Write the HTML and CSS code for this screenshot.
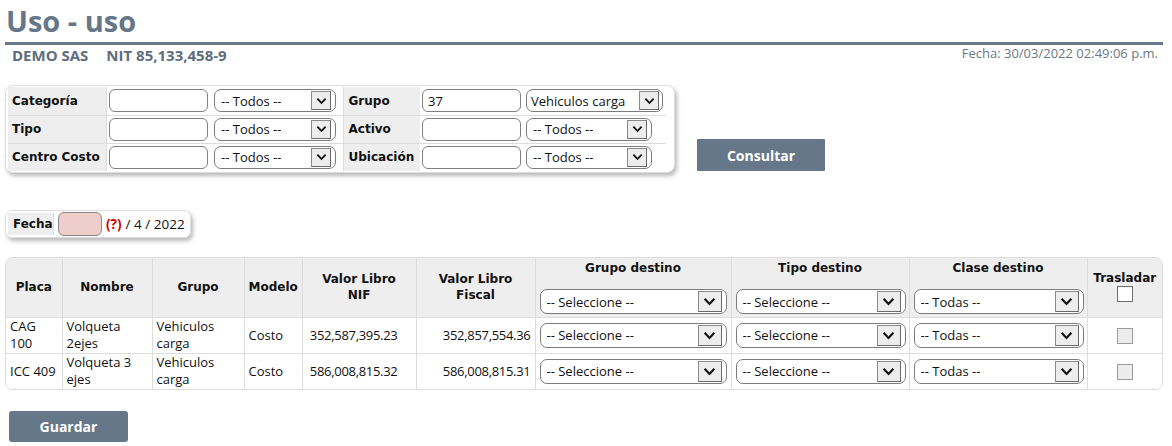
FILE: index.html
```html
<!DOCTYPE html>
<html lang="es">
<head>
<meta charset="utf-8">
<title>Uso - uso</title>
<link rel="stylesheet" href="styles.css">
</head>
<body>
<div class="page">
  <h1 class="title">Uso - uso</h1>
  <div class="subhead">
    <span class="company">DEMO SAS</span>
    <span class="nit">NIT 85,133,458-9</span>
    <span class="stamp">Fecha: 30/03/2022 02:49:06 p.m.</span>
  </div>

  <div class="filters-row">
    <div class="filters">
      <table class="ftable">
        <tr>
          <td class="flabel c1">Categoría</td>
          <td class="c2"><span class="txt"></span></td>
          <td class="c3 sep"><span class="sel w-f"><span class="sel-text">-- Todos --</span><span class="sel-btn"><svg viewBox="0 0 12 8"><path d="M1.5 1.5 L6 6.2 L10.5 1.5"/></svg></span></span></td>
          <td class="flabel c4">Grupo</td>
          <td class="c5"><span class="txt">37</span></td>
          <td class="c6"><span class="sel w-fw"><span class="sel-text">Vehiculos carga</span><span class="sel-btn"><svg viewBox="0 0 12 8"><path d="M1.5 1.5 L6 6.2 L10.5 1.5"/></svg></span></span></td>
        </tr>
        <tr>
          <td class="flabel c1">Tipo</td>
          <td class="c2"><span class="txt"></span></td>
          <td class="c3 sep"><span class="sel w-f"><span class="sel-text">-- Todos --</span><span class="sel-btn"><svg viewBox="0 0 12 8"><path d="M1.5 1.5 L6 6.2 L10.5 1.5"/></svg></span></span></td>
          <td class="flabel c4">Activo</td>
          <td class="c5"><span class="txt"></span></td>
          <td class="c6"><span class="sel w-f2"><span class="sel-text">-- Todos --</span><span class="sel-btn"><svg viewBox="0 0 12 8"><path d="M1.5 1.5 L6 6.2 L10.5 1.5"/></svg></span></span></td>
        </tr>
        <tr>
          <td class="flabel c1">Centro Costo</td>
          <td class="c2"><span class="txt"></span></td>
          <td class="c3 sep"><span class="sel w-f"><span class="sel-text">-- Todos --</span><span class="sel-btn"><svg viewBox="0 0 12 8"><path d="M1.5 1.5 L6 6.2 L10.5 1.5"/></svg></span></span></td>
          <td class="flabel c4">Ubicación</td>
          <td class="c5"><span class="txt"></span></td>
          <td class="c6"><span class="sel w-f2"><span class="sel-text">-- Todos --</span><span class="sel-btn"><svg viewBox="0 0 12 8"><path d="M1.5 1.5 L6 6.2 L10.5 1.5"/></svg></span></span></td>
        </tr>
      </table>
    </div>
    <button class="btn btn-consultar">Consultar</button>
  </div>

  <div class="fecha-box">
    <span class="flabel fecha-label">Fecha</span>
    <span class="fecha-input"></span>
    <span class="fecha-q">(?)</span>
    <span class="fecha-rest">/ 4 / 2022</span>
  </div>

  <div class="grid-wrap">
    <table class="grid">
      <thead>
        <tr>
          <th class="g1">Placa</th>
          <th class="g2">Nombre</th>
          <th class="g3">Grupo</th>
          <th class="g4">Modelo</th>
          <th class="g5">Valor Libro<br>NIF</th>
          <th class="g6">Valor Libro<br>Fiscal</th>
          <th class="g7 top"><div class="th-title">Grupo destino</div><span class="sel w-g7"><span class="sel-text">-- Seleccione --</span><span class="sel-btn big"><svg viewBox="0 0 12 8"><path d="M1.5 1.5 L6 6.2 L10.5 1.5"/></svg></span></span></th>
          <th class="g8 top"><div class="th-title">Tipo destino</div><span class="sel w-g8"><span class="sel-text">-- Seleccione --</span><span class="sel-btn big"><svg viewBox="0 0 12 8"><path d="M1.5 1.5 L6 6.2 L10.5 1.5"/></svg></span></span></th>
          <th class="g9 top"><div class="th-title">Clase destino</div><span class="sel w-g8"><span class="sel-text">-- Todas --</span><span class="sel-btn big"><svg viewBox="0 0 12 8"><path d="M1.5 1.5 L6 6.2 L10.5 1.5"/></svg></span></span></th>
          <th class="g10"><div class="th-trasladar">Trasladar</div><span class="chk chk-head"></span></th>
        </tr>
      </thead>
      <tbody>
        <tr>
          <td>CAG<br>100</td>
          <td>Volqueta<br>2ejes</td>
          <td>Vehiculos<br>carga</td>
          <td>Costo</td>
          <td class="num nif">352,587,395.23</td>
          <td class="num">352,857,554.36</td>
          <td class="selcell"><span class="sel w-g7"><span class="sel-text">-- Seleccione --</span><span class="sel-btn big"><svg viewBox="0 0 12 8"><path d="M1.5 1.5 L6 6.2 L10.5 1.5"/></svg></span></span></td>
          <td class="selcell"><span class="sel w-g8"><span class="sel-text">-- Seleccione --</span><span class="sel-btn big"><svg viewBox="0 0 12 8"><path d="M1.5 1.5 L6 6.2 L10.5 1.5"/></svg></span></span></td>
          <td class="selcell"><span class="sel w-g8"><span class="sel-text">-- Todas --</span><span class="sel-btn big"><svg viewBox="0 0 12 8"><path d="M1.5 1.5 L6 6.2 L10.5 1.5"/></svg></span></span></td>
          <td class="center"><span class="chk chk-row"></span></td>
        </tr>
        <tr>
          <td>ICC 409</td>
          <td>Volqueta 3<br>ejes</td>
          <td>Vehiculos<br>carga</td>
          <td>Costo</td>
          <td class="num nif">586,008,815.32</td>
          <td class="num">586,008,815.31</td>
          <td class="selcell"><span class="sel w-g7"><span class="sel-text">-- Seleccione --</span><span class="sel-btn big"><svg viewBox="0 0 12 8"><path d="M1.5 1.5 L6 6.2 L10.5 1.5"/></svg></span></span></td>
          <td class="selcell"><span class="sel w-g8"><span class="sel-text">-- Seleccione --</span><span class="sel-btn big"><svg viewBox="0 0 12 8"><path d="M1.5 1.5 L6 6.2 L10.5 1.5"/></svg></span></span></td>
          <td class="selcell"><span class="sel w-g8"><span class="sel-text">-- Todas --</span><span class="sel-btn big"><svg viewBox="0 0 12 8"><path d="M1.5 1.5 L6 6.2 L10.5 1.5"/></svg></span></span></td>
          <td class="center"><span class="chk chk-row"></span></td>
        </tr>
      </tbody>
    </table>
  </div>

  <button class="btn btn-guardar">Guardar</button>
</div>
</body>
</html>
```

FILE: styles.css
```css
html, body {
  margin: 0;
  padding: 0;
  background: #ffffff;
}

body {
  font-family: "Open Sans", "Noto Sans", sans-serif;
  font-size: 13px;
  color: #111111;
}

.page {
  padding: 0 9px 0 5px;
  width: 1158px;
}

.title {
  margin: 0;
  padding: 3px 0 3px 1px;
  line-height: 36px;
  font-size: 29px;
  font-weight: 700;
  color: #66778a;
  border-bottom: 3px solid #66778a;
}

.subhead {
  display: flex;
  align-items: flex-start;
  color: #5e6d7d;
}

.company, .nit {
  font-weight: 700;
  font-size: 15px;
  line-height: 18px;
  margin-top: 1px;
}

.company {
  margin-left: 7px;
}

.nit {
  margin-left: 18px;
}

.stamp {
  margin-left: auto;
  margin-right: 5px;
  font-size: 13px;
  line-height: 16px;
  color: #6d7782;
}

/* ---------- filters ---------- */
.filters-row {
  display: flex;
  align-items: flex-end;
  margin-top: 21px;
}

.filters {
  border: 1px solid #dedede;
  border-radius: 8px;
  padding: 1px 2px;
  background: #fff;
  box-shadow: 2px 3px 4px rgba(0, 0, 0, 0.28);
  width: 664px;
}

.ftable {
  border-collapse: collapse;
}

.ftable td {
  height: 28px;
  padding: 0;
  border-top: 1px solid #dcdcdc;
  box-sizing: border-box;
  vertical-align: middle;
}

.ftable tr:first-child td {
  border-top: none;
}

.flabel {
  background: #eeeeee;
  font-family: "DejaVu Sans", Verdana, sans-serif;
  font-weight: 700;
  font-size: 12px;
  color: #111;
  white-space: nowrap;
}

.c1 { width: 98px; padding-left: 4px !important; border-right: 1px solid #dcdcdc; }
.c2 { width: 104px; padding-left: 2px !important; }
.c3 { width: 133px; padding-left: 4px !important; }
.sep { border-right: 1px solid #dcdcdc; }
.c4 { width: 77px; padding-left: 5px !important; }
.c5 { width: 104px; padding-left: 2px !important; }
.c6 { width: 142px; padding-left: 2px !important; }

.txt {
  display: flex;
  align-items: center;
  box-sizing: border-box;
  width: 99px;
  height: 23px;
  border: 1px solid #808080;
  border-radius: 6px;
  padding: 0 5px;
  background: #fff;
  font-size: 13px;
}

.sel {
  display: inline-flex;
  align-items: center;
  justify-content: space-between;
  box-sizing: border-box;
  height: 23px;
  border: 1px solid #7c7c7c;
  border-radius: 7px;
  padding: 0 4px 0 6px;
  background: #fff;
  vertical-align: middle;
  text-align: left;
  font-family: "Open Sans", "Noto Sans", sans-serif;
  font-weight: 400;
  font-size: 13px;
  color: #111;
  white-space: nowrap;
}

.sel-text {
  overflow: hidden;
}

.sel-btn {
  display: flex;
  align-items: center;
  justify-content: center;
  box-sizing: border-box;
  width: 20px;
  height: 19px;
  background: #ededed;
  border: 1px solid #8a8a8a;
  border-right-color: #6a6a6a;
  border-bottom-color: #6a6a6a;
  flex: none;
}

.sel-btn svg {
  width: 11px;
  height: 8px;
  fill: none;
  stroke: #111;
  stroke-width: 2;
}

.sel-btn.big {
  width: 24px;
  height: 21px;
}

.sel-btn.big svg {
  width: 13px;
  height: 9px;
}

.w-f { width: 122px; }
.w-f2 { width: 126px; }
.w-fw { width: 137px; padding-right: 3px; padding-left: 4px; }
.w-g7 { width: 187px; height: 25px; }
.w-g8 { width: 170px; height: 25px; }

.btn {
  display: block;
  border: none;
  border-radius: 3px;
  background: #667789;
  color: #ffffff;
  font-family: "Open Sans", "Noto Sans", sans-serif;
  font-weight: 700;
  font-size: 14px;
  padding: 0;
}

.btn-consultar {
  width: 128px;
  height: 32px;
  margin-left: 22px;
  margin-bottom: 2px;
  border-radius: 1px;
}

/* ---------- fecha ---------- */
.fecha-box {
  display: inline-flex;
  align-items: stretch;
  margin-top: 37px;
  border: 1px solid #dedede;
  border-radius: 7px;
  padding: 2px 5px 2px 2px;
  box-shadow: 2px 3px 4px rgba(0, 0, 0, 0.28);
  height: 28px;
  box-sizing: border-box;
}

.fecha-label {
  display: flex;
  align-items: center;
  padding: 0 4px 0 5px;
  width: 46px;
  box-sizing: border-box;
  border-right: 1px solid #dcdcdc;
}

.fecha-input {
  display: block;
  align-self: center;
  width: 44px;
  height: 24px;
  box-sizing: border-box;
  margin-left: 4px;
  border: 1px solid #888;
  border-radius: 6px;
  background: #efcdcd;
}

.fecha-q {
  display: flex;
  align-items: center;
  margin-left: 4px;
  color: #cc0000;
  font-weight: 700;
  font-size: 13.5px;
}

.fecha-rest {
  display: flex;
  align-items: center;
  margin-left: 4px;
  white-space: pre;
  font-size: 13.5px;
}

/* ---------- grid ---------- */
.grid-wrap {
  margin-top: 19px;
  border: 1px solid #dddddd;
  border-radius: 7px;
  overflow: hidden;
  width: 1158px;
  box-sizing: border-box;
}

.grid {
  border-collapse: collapse;
  table-layout: fixed;
  width: 1156px;
}

.grid th, .grid td {
  border-left: 1px solid #dddddd;
  border-top: 1px solid #dddddd;
  padding: 0 4px;
  box-sizing: border-box;
}

.grid th:first-child, .grid td:first-child {
  border-left: none;
}

.grid thead th {
  border-top: none;
  background: #eeeeee;
  height: 59px;
  font-family: "DejaVu Sans", Verdana, sans-serif;
  font-weight: 700;
  font-size: 12px;
  line-height: 16px;
  color: #111;
  text-align: center;
  vertical-align: middle;
}

.grid thead th.top {
  vertical-align: top;
  padding-top: 2px;
}

.th-title {
  line-height: 17px;
  margin-bottom: 12px;
}

.th-trasladar {
  line-height: 16px;
}

.grid td {
  height: 36px;
  line-height: 17px;
  vertical-align: middle;
  font-size: 13px;
}

.grid td.num {
  text-align: right;
  letter-spacing: -0.3px;
}

.grid td.nif {
  padding-right: 18px;
}

.grid td.selcell {
  padding: 0 4px;
}

.grid td.center {
  text-align: center;
}

.g1 { width: 56px; }
.g2 { width: 90px; }
.g3 { width: 92px; }
.g4 { width: 58px; }
.g5 { width: 114px; }
.g6 { width: 119px; }
.g7 { width: 196px; }
.g8 { width: 178px; }
.g9 { width: 178px; }
.g10 { width: 75px; }

.chk {
  display: inline-block;
  box-sizing: border-box;
  width: 16px;
  height: 16px;
  vertical-align: middle;
}

.chk-head {
  background: #ffffff;
  border: 1px solid #6f6f6f;
  margin-bottom: 2px;
}

.chk-row {
  background: #ececec;
  border: 1px solid #9a9a9a;
}

.btn-guardar {
  width: 119px;
  height: 31px;
  margin-top: 21px;
  margin-left: 4px;
}
```
